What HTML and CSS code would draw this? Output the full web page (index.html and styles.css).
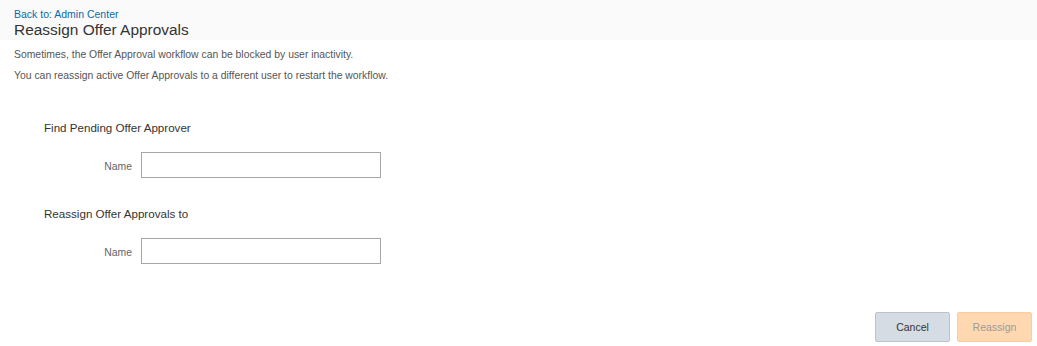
FILE: index.html
```html
<!DOCTYPE html>
<html>
<head>
<meta charset="utf-8">
<link rel="stylesheet" href="styles.css">
</head>
<body>
<div class="header">
  <a class="back" href="#">Back to: Admin Center</a>
  <h1 class="title">Reassign Offer Approvals</h1>
</div>
<div class="intro">
  <p>Sometimes, the Offer Approval workflow can be blocked by user inactivity.</p>
  <p>You can reassign active Offer Approvals to a different user to restart the workflow.</p>
</div>
<div class="section first">
  <h2 class="sec-title">Find Pending Offer Approver</h2>
  <div class="row">
    <label class="lbl">Name</label>
    <input class="field" type="text">
  </div>
</div>
<div class="section second">
  <h2 class="sec-title">Reassign Offer Approvals to</h2>
  <div class="row">
    <label class="lbl">Name</label>
    <input class="field" type="text">
  </div>
</div>
<div class="actions">
  <button class="btn cancel">Cancel</button>
  <button class="btn reassign">Reassign</button>
</div>
</body>
</html>
```
FILE: styles.css
```css
html, body {
  margin: 0;
  padding: 0;
  background: #ffffff;
  font-family: "Liberation Sans", Arial, sans-serif;
}
.header {
  background: #fafafa;
  height: 40px;
  box-sizing: border-box;
  padding: 8px 0 0 14px;
}
.back {
  display: block;
  font-size: 10.5px;
  line-height: 12px;
  color: #0b6aa8;
  text-decoration: none;
}
.title {
  margin: 0;
  font-weight: normal;
  font-size: 15.45px;
  line-height: 19px;
  color: #333333;
}
.intro {
  padding: 6px 0 0 14px;
  display: flex;
  flex-direction: column;
  gap: 4px;
}
.intro p {
  margin: 0;
  font-size: 10.4px;
  line-height: 17px;
  color: #555555;
}
.section {
  padding-left: 44px;
}
.section.first {
  margin-top: 37px;
}
.section.second {
  margin-top: 29px;
}
.sec-title {
  margin: 0;
  font-weight: normal;
  font-size: 11.6px;
  line-height: 14px;
  color: #333333;
}
.row {
  display: flex;
  align-items: center;
  gap: 9px;
  margin-top: 17px;
}
.lbl {
  width: 88px;
  text-align: right;
  font-size: 10.4px;
  line-height: 12px;
  padding-top: 3px;
  color: #666666;
}
.field {
  box-sizing: border-box;
  width: 240px;
  height: 26px;
  margin: 0;
  border: 1px solid #a6a6a6;
  border-radius: 0;
  background: #ffffff;
  padding: 0 6px;
  outline: none;
}
.actions {
  display: flex;
  justify-content: flex-end;
  gap: 7px;
  margin-top: 48px;
  padding-right: 5px;
}
.btn {
  box-sizing: border-box;
  width: 75px;
  height: 30px;
  margin: 0;
  font-family: "Liberation Sans", Arial, sans-serif;
  font-size: 10.5px;
  border-radius: 2px;
  padding: 0;
}
.cancel {
  background: #d5dce3;
  border: 1px solid #bcc4cb;
  color: #333333;
}
.reassign {
  background: #ffd8b2;
  border: 1px solid #ffcb98;
  color: #9a9a9a;
}
```
